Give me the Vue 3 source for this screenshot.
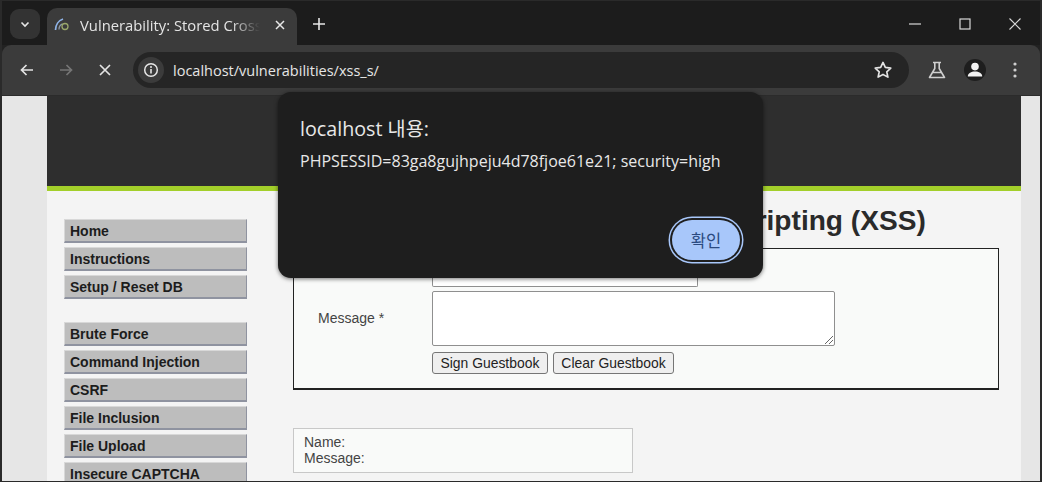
<script setup>
const group1 = ['Home', 'Instructions', 'Setup / Reset DB']
const group2 = ['Brute Force', 'Command Injection', 'CSRF', 'File Inclusion', 'File Upload', 'Insecure CAPTCHA']
</script>

<template>
  <div class="window">
    <div class="tabstrip">
      <div class="tabsearch">
        <svg width="12" height="12" viewBox="0 0 12 12"><path d="M2.5 4.5 6 8l3.5-3.5" fill="none" stroke="#e6e6e6" stroke-width="1.6"/></svg>
      </div>
      <div class="tab">
        <svg class="favicon" width="16" height="16" viewBox="0 0 16 16">
          <path d="M1.500 13C1.500 8 4.500 3.500 9 2" fill="none" stroke="#8fb4e8" stroke-width="1.7"/>
          <path d="M5 12.500C5 9.500 6.500 7.500 8.500 6.800" fill="none" stroke="#8e9aa8" stroke-width="1.3"/>
          <circle cx="11" cy="9.500" r="3" fill="none" stroke="#9aa86a" stroke-width="1.300"/>
        </svg>
        <span class="tabtitle">Vulnerability: Stored Cross Site Scripting</span>
        <svg class="tabclose" width="10" height="10" viewBox="0 0 10 10"><path d="M1 1l8 8M9 1l-8 8" stroke="#e8e8e8" stroke-width="1.5"/></svg>
      </div>
      <svg class="newtab" width="14" height="14" viewBox="0 0 14 14"><path d="M7 1v12M1 7h12" stroke="#e6e6e6" stroke-width="1.6"/></svg>
      <div class="wincontrols">
        <svg width="12" height="12" viewBox="0 0 12 12"><path d="M0 6h12" stroke="#d8d8d8" stroke-width="1.2"/></svg>
        <svg width="12" height="12" viewBox="0 0 12 12"><rect x="1" y="1" width="10" height="10" fill="none" stroke="#d8d8d8" stroke-width="1.2"/></svg>
        <svg width="12" height="12" viewBox="0 0 12 12"><path d="M.5.5l11 11M11.500.5l-11 11" stroke="#d8d8d8" stroke-width="1.1"/></svg>
      </div>
    </div>
    <div class="toolbar">
      <svg class="navicon" width="16" height="16" viewBox="0 0 16 16"><path d="M14 8H2.500M7.500 3 2.500 8l5 5" fill="none" stroke="#e3e3e3" stroke-width="1.7"/></svg>
      <svg class="navicon" width="16" height="16" viewBox="0 0 16 16"><path d="M2 8h11.500M8.500 3l5 5-5 5" fill="none" stroke="#767676" stroke-width="1.700"/></svg>
      <svg class="navicon" width="16" height="16" viewBox="0 0 16 16"><path d="M3 3l10 10M13 3 3 13" fill="none" stroke="#e3e3e3" stroke-width="1.700"/></svg>
      <div class="omnibox">
        <div class="infochip">
          <svg width="16" height="16" viewBox="0 0 16 16"><circle cx="8" cy="8" r="6.300" fill="none" stroke="#e6e6e6" stroke-width="1.500"/><path d="M8 7v4.500" stroke="#e6e6e6" stroke-width="1.600"/><circle cx="8" cy="4.900" r="1" fill="#e6e6e6"/></svg>
        </div>
        <span class="url">localhost/vulnerabilities/xss_s/</span>
        <svg class="star" width="20" height="20" viewBox="0 0 18 18"><path d="M9 2.200l2.100 4.500 4.900.6-3.600 3.300 1 4.800L9 13l-4.400 2.400 1-4.800L2 7.300l4.900-.6z" fill="none" stroke="#e3e3e3" stroke-width="1.500" stroke-linejoin="round"/></svg>
      </div>
      <svg class="flask" width="18" height="18" viewBox="0 0 18 18"><path d="M5 1.500h8M6.800 1.500v6L1.500 16.500h15L11.200 7.500v-6M4.500 11.500h9" fill="none" stroke="#cfcfcf" stroke-width="1.600" stroke-linejoin="round"/></svg>
      <div class="avatar">
        <svg width="22" height="22" viewBox="0 0 22 22"><circle cx="11" cy="7.600" r="3.800" fill="#f2f2f2"/><path d="M3.800 17.500c0-3.500 3.400-5 7.200-5s7.200 1.500 7.200 5z" fill="#f2f2f2"/></svg>
      </div>
      <svg class="menu" width="4" height="16" viewBox="0 0 4 16"><circle cx="2" cy="2" r="1.600" fill="#cfcfcf"/><circle cx="2" cy="8" r="1.600" fill="#cfcfcf"/><circle cx="2" cy="14" r="1.600" fill="#cfcfcf"/></svg>
    </div>
    <div class="page">
      <div class="container">
        <div class="header"></div>
        <div class="content">
          <nav class="sidebar">
            <ul class="menu-group">
              <li v-for="item in group1" :key="item">{{ item }}</li>
            </ul>
            <ul class="menu-group">
              <li v-for="item in group2" :key="item">{{ item }}</li>
            </ul>
          </nav>
          <main class="main">
            <h1>Vulnerability: Stored Cross Site Scripting (XSS)</h1>
            <div class="formbox">
              <div class="row namerow">
                <span class="label namelabel">Name *</span>
                <div class="nameinput"></div>
              </div>
              <div class="row">
                <span class="label msglabel">Message *</span>
                <div class="msgfield">
                  <div class="textarea">
                    <svg class="grip" width="9" height="9" viewBox="0 0 9 9"><path d="M1 9l8-8M5 9l4-4" stroke="#666" stroke-width="1"/></svg>
                  </div>
                  <div class="buttons">
                    <button>Sign Guestbook</button>
                    <button>Clear Guestbook</button>
                  </div>
                </div>
              </div>
            </div>
            <div class="entry">Name:<br />Message:</div>
          </main>
        </div>
      </div>
    </div>
    <div class="dialog">
      <div class="dlgtitle">localhost 내용:</div>
      <div class="dlgmsg">PHPSESSID=83ga8gujhpeju4d78fjoe61e21; security=high</div>
      <div class="dlgactions"><button class="ok">확인</button></div>
    </div>
  </div>
</template>

<style>
html, body { margin: 0; overflow: hidden; background: #222; }
</style>

<style scoped>
.window {
  position: relative;
  width: 1042px;
  height: 482px;
  box-sizing: border-box;
  border: 2px solid #2a2a2a;
  border-bottom-width: 1px;
  border-top-width: 1px;
  display: flex;
  flex-direction: column;
  overflow: hidden;
  font-family: "Liberation Sans", Arial, sans-serif;
}
.tabstrip {
  height: 44px;
  flex: none;
  background: #1c1c1c;
  display: flex;
  align-items: flex-start;
  padding-left: 8px;
  box-sizing: border-box;
}
.tabsearch {
  width: 30px;
  height: 30px;
  margin-top: 8px;
  border-radius: 9px;
  background: #333;
  display: flex;
  align-items: center;
  justify-content: center;
}
.tab {
  width: 250px;
  height: 37px;
  margin-top: 7px;
  margin-left: 7px;
  background: #3b3b3b;
  border-radius: 10px 10px 0 0;
  display: flex;
  align-items: center;
  box-sizing: border-box;
  padding: 0 12px 4px 7px;
  color: #e4e4e4;
}
.favicon { flex: none; margin-right: 10px; }
.tabtitle {
  flex: 1;
  min-width: 0;
  white-space: nowrap;
  overflow: hidden;
  font-family: "Open Sans", sans-serif;
  font-size: 14.800px;
  -webkit-mask-image: linear-gradient(90deg, #000 84%, transparent 100%);
  mask-image: linear-gradient(90deg, #000 84%, transparent 100%);
}
.tabclose { flex: none; margin-left: 15px; }
.newtab { margin: 16px 0 0 15px; }
.wincontrols {
  margin-left: auto;
  margin-top: 17px;
  display: flex;
  gap: 38px;
  padding-right: 19px;
}
.toolbar {
  height: 51px;
  flex: none;
  background: #3b3b3b;
  border-radius: 9px 9px 0 0;
  border-bottom: 1px solid #2b2b2b;
  box-sizing: border-box;
  display: flex;
  align-items: center;
  padding-left: 17px;
}
.navicon { margin-right: 23px; flex: none; }
.navicon:nth-of-type(3) { margin-right: 20px; }
.omnibox {
  width: 776px;
  height: 36px;
  background: #252525;
  border-radius: 18px;
  display: flex;
  align-items: center;
  padding-left: 4px;
  box-sizing: border-box;
  flex: none;
}
.infochip {
  width: 26px;
  height: 26px;
  border-radius: 50%;
  background: #3b3b3b;
  display: flex;
  align-items: center;
  justify-content: center;
  margin-left: 1px;
}
.url {
  margin-left: 9px;
  color: #e6e6e6;
  font-family: "Open Sans", sans-serif;
  font-size: 14.500px;
}
.star { margin-left: auto; margin-right: 16px; }
.flask { margin-left: 19px; flex: none; }
.avatar {
  margin-left: 18px;
  width: 22px;
  height: 22px;
  border-radius: 50%;
  background: #1e1e1e;
  flex: none;
  display: flex;
  overflow: hidden;
}
.menu { margin-left: 27px; flex: none; }
.page {
  flex: 1;
  min-height: 0;
  background: #e6e6e6;
  padding: 0 19px 0 45px;
  overflow: hidden;
}
.container {
  height: 100%;
  background: #f4f4f4;
  overflow: hidden;
}
.header {
  height: 90px;
  background: #2e2e2e;
  border-bottom: 5px solid #a3cf2a;
}
.content { display: flex; }
.sidebar { width: 183px; margin-left: 17px; padding-top: 28px; flex: none; }
.menu-group { list-style: none; margin: 0 0 23px; padding: 0; }
.menu-group li {
  height: 24px;
  line-height: 23px;
  box-sizing: border-box;
  margin-bottom: 4px;
  padding-left: 5px;
  background: #bdbdbd;
  border-top: 1px solid #d8d8d8;
  border-left: 1px solid #d8d8d8;
  border-right: 1px solid #8f93a0;
  border-bottom: 2px solid #8f93a0;
  color: #1c1c1c;
  font-size: 14px;
  font-weight: 700;
}
.main { margin-left: 46px; width: 706px; flex: none; }
h1 {
  margin: 15px 0 0;
  height: 42px;
  line-height: 30px;
  font-size: 28.100px;
  font-weight: 700;
  color: #2a2a2a;
  white-space: nowrap;
}
.formbox {
  height: 142px;
  box-sizing: border-box;
  border: 1px solid #222;
  border-bottom-width: 2px;
  background: #f9faf9;
  padding-top: 26px;
  color: #444;
  font-size: 14px;
}
.row { display: flex; }
.label { width: 138px; padding-left: 24px; box-sizing: border-box; flex: none; }
.namerow { height: 12px; margin-bottom: 4px; }
.namelabel { margin-top: -16px; }
.nameinput {
  width: 266px;
  height: 12px;
  box-sizing: border-box;
  border: 1px solid #8f8f8f;
  border-top: none;
  border-radius: 0 0 2px 2px;
  background: #fff;
}
.msglabel { padding-top: 19px; }
.textarea {
  position: relative;
  width: 403px;
  height: 55px;
  box-sizing: border-box;
  border: 1px solid #8f8f8f;
  border-radius: 2px;
  background: #fff;
}
.grip { position: absolute; right: 1px; bottom: 1px; }
.buttons { display: flex; gap: 5px; margin-top: 6px; }
.buttons button {
  height: 22px;
  padding: 0 7.500px;
  box-sizing: border-box;
  border: 1px solid #767676;
  border-radius: 3px;
  background: #efefef;
  color: #222;
  font-family: inherit;
  font-size: 13.900px;
}
.entry {
  margin-top: 38px;
  width: 340px;
  height: 45px;
  box-sizing: border-box;
  border: 1px solid #c8c8c8;
  background: #f9faf9;
  padding: 5px 10px;
  color: #444;
  font-size: 14px;
  line-height: 16px;
}
.dialog {
  position: absolute;
  left: 276px;
  top: 91px;
  width: 485px;
  height: 186px;
  box-sizing: border-box;
  padding: 24px 22px 0;
  background: #1e1e1e;
  border-radius: 13px;
  box-shadow: 0 1px 4px rgba(0, 0, 0, .55);
  color: #e8e8e8;
  font-family: "Open Sans", "Noto Sans CJK KR", sans-serif;
  display: flex;
  flex-direction: column;
}
.dlgtitle { font-size: 19.700px; line-height: 26px; }
.dlgmsg { margin-top: 8px; font-size: 16px; line-height: 22px; white-space: nowrap; }
.dlgactions { margin-top: auto; display: flex; justify-content: flex-end; padding-bottom: 18px; }
.ok {
  width: 68px;
  height: 40px;
  margin-right: 1px;
  border: none;
  border-radius: 20px;
  background: #a8c7fa;
  color: #2a4a80;
  font-family: "Noto Sans CJK KR", sans-serif;
  font-size: 16.500px;
  box-shadow: 0 0 0 2px #1e1e1e, 0 0 0 3.500px #a8c7fa;
  padding: 0;
}
</style>
